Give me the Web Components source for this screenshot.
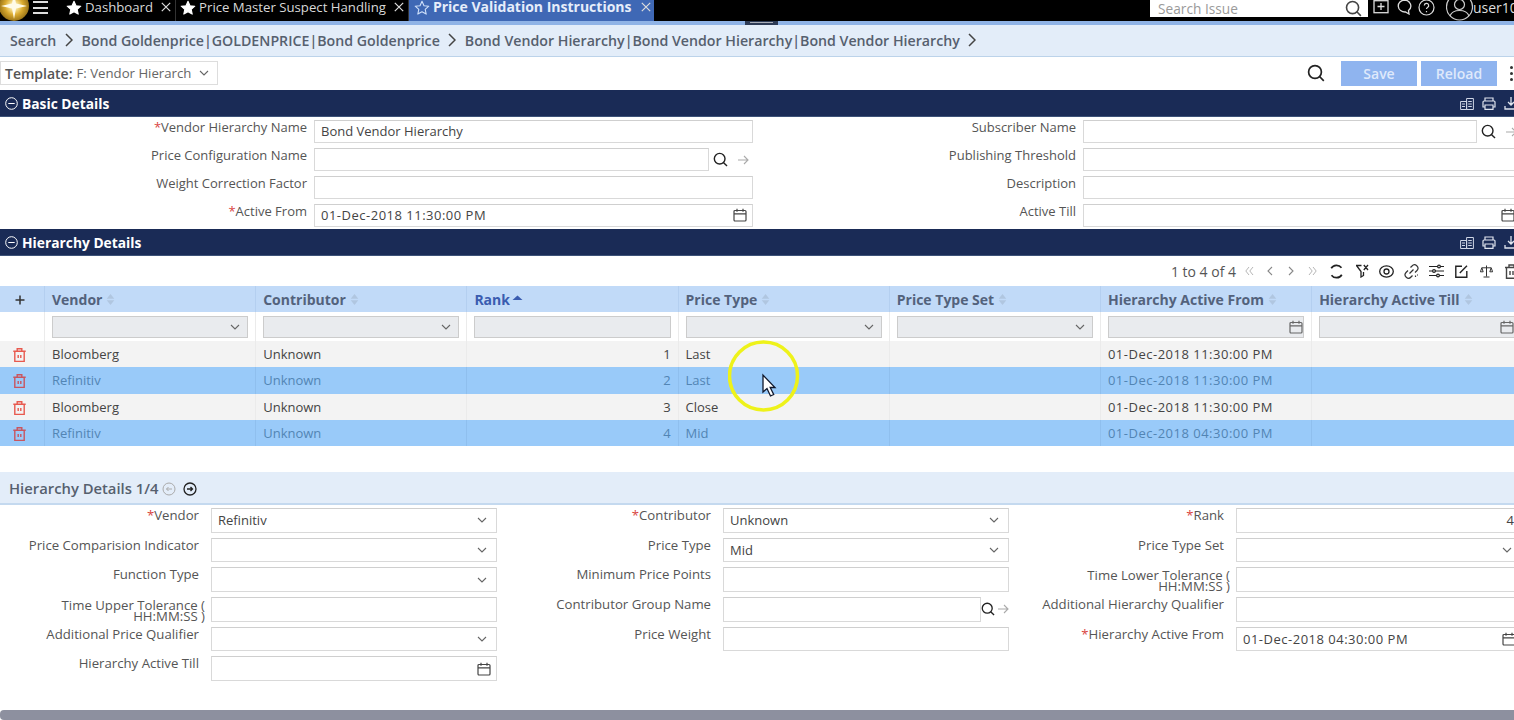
<!DOCTYPE html>
<html><head><meta charset="utf-8">
<style>
html,body{margin:0;padding:0;background:#fff;overflow:hidden;height:100%}
body{font:13px "Open Sans","Noto Sans",sans-serif;color:#444}
</style></head>
<body>
<pv-app></pv-app>
<script>
const I={
 search:(s=18,c='#222')=>`<svg width="${s}" height="${s}" viewBox="0 0 18 18" fill="none" stroke="${c}" stroke-width="1.7"><circle cx="8" cy="8" r="6.4"/><path d="M12.5 12.500 16.8 16.800"/></svg>`,
 arrow:(c='#aaa')=>`<svg width="12" height="12" viewBox="0 0 12 12" fill="none" stroke="${c}" stroke-width="1.1"><path d="M1 6h10M7 2l4 4-4 4"/></svg>`,
 chev:(c='#666')=>`<svg width="10" height="6" viewBox="0 0 10 6" fill="none" stroke="${c}" stroke-width="1.1"><path d="M1 1l4 4 4-4"/></svg>`,
 cal:(c='#444')=>`<svg width="14" height="14" viewBox="0 0 14 14" fill="none" stroke="${c}" stroke-width="1.2"><rect x="1" y="2.500" width="12" height="10.500" rx="1"/><path d="M1 5.800h12M4 .8v3M10 .8v3"/></svg>`,
 star:(f='#fff',st='#fff')=>`<svg width="16" height="16" viewBox="0 0 16 16" fill="${f}" stroke="${st}" stroke-width="1.1" stroke-linejoin="round"><path d="M8 1.300l2 4.400 4.800.5-3.600 3.200 1 4.700L8 11.700l-4.200 2.400 1-4.700L1.200 6.200 6 5.700z"/></svg>`,
 x:(c='#ddd')=>`<svg width="10" height="10" viewBox="0 0 10 10" fill="none" stroke="${c}" stroke-width="1.2"><path d="M.8.800l8.400 8.400M9.200.800L.8 9.200"/></svg>`,
 trash:(c='#e8594e')=>`<svg width="13" height="14" viewBox="0 0 13 14" fill="none" stroke="${c}" stroke-width="1.4"><path d="M.3 3.200h12.400M1.800 3.200v10.200h9.400V3.200M4.200 3.200V.7h4.600v2.500M5.200 7v3M7.800 7v3"/></svg>`,
 circMinus:()=>`<svg width="13" height="13" viewBox="0 0 13 13" fill="none" stroke="#fff" stroke-width="1"><circle cx="6.500" cy="6.500" r="5.800"/><path d="M3.300 6.500h6.400"/></svg>`,
 report:(c='#cfd6e6')=>`<svg width="14" height="13" viewBox="0 0 14 13" fill="none" stroke="${c}" stroke-width="1"><path d="M.6 4.500h6v8h-6zM6.600 1.500h6.800v11H6.600zM2 7h3M2 9.500h3M8.200 4.500h3.600M8.200 7h3.600M8.200 9.500h3.600"/></svg>`,
 print:(c='#dfe4ee')=>`<svg width="14" height="13" viewBox="0 0 14 13" fill="none" stroke="${c}" stroke-width="1.2"><path d="M3 4V1h8v3M3 10H1V5a1 1 0 0 1 1-1h10a1 1 0 0 1 1 1v5h-2M3 8h8v4.400H3z"/></svg>`,
 dl:(c='#dfe4ee')=>`<svg width="14" height="13" viewBox="0 0 14 13" fill="none" stroke="${c}" stroke-width="1.3"><path d="M7 0v7.500M4 5l3 3 3-3M1 9v3h12V9"/></svg>`
};
function def(name,html){customElements.define(name,class extends HTMLElement{
 connectedCallback(){if(this.shadowRoot)return;const r=this.attachShadow({mode:'open'});r.innerHTML=typeof html==='function'?html(this):html;}
});}

def('top-tab',e=>{const a=e.hasAttribute('active'),f=e.hasAttribute('first');
 return `<style>
:host{display:flex;align-items:flex-start;height:21px;padding:0 ${a?3:4}px 0 ${f?0:a?5:4}px;color:${a?'#e6edfa':'#d8d8d8'};background:${a?'#3f68b5':'transparent'};font-size:${a?14:13.2}px;font-weight:${a?700:400};line-height:14px;white-space:nowrap;box-sizing:border-box;border-right:${a?'0':'1px solid #333'}}
svg{display:block;flex:none}
.s{margin-right:3px}.x{margin:2px 0 0 ${a?9:8}px}
</style><span class="s">${a?I.star('none','#cfe0fa'):I.star()}</span><slot></slot><span class="x">${I.x()}</span>`});

def('top-bar',`<style>
:host{display:flex;align-items:flex-start;height:21px;background:#000;color:#ddd;overflow:hidden}
.logo{width:29px;height:21px;overflow:hidden;flex:none;margin-right:4px}
.ham{width:15px;margin:0 18px 0 0;flex:none;padding-top:1px}
.ham b{display:block;height:2px;background:#ddd;margin-bottom:3.500px}
.tabs{display:flex;flex:none}
.sp{flex:1}
.s{flex:none;width:218px;height:17px;background:#fff;display:flex;align-items:center;justify-content:space-between;padding:0 6px 0 8px;box-sizing:border-box;color:#9a9a9a;font-size:13.700px}
.ic{display:flex;align-items:flex-start;flex:none;height:21px;width:146px;overflow:hidden;color:#ddd;font-size:14px;line-height:15px;white-space:nowrap;box-sizing:border-box;padding-left:5px}
svg{display:block;flex:none}
</style>
<div class="logo"><svg width="29" height="21" viewBox="0 0 29 21"><defs><radialGradient id="g" cx="14" cy="6" r="15" gradientUnits="userSpaceOnUse"><stop offset="0" stop-color="#fff"/><stop offset=".3" stop-color="#f4dc8a"/><stop offset=".6" stop-color="#d9a92e"/><stop offset="1" stop-color="#9a7418"/></radialGradient></defs><circle cx="14" cy="6" r="15" fill="url(#g)"/><path d="M14-7l2 10.500L27 6 16 8.500 14 19 12 8.500 1 6l11-2.500z" fill="#fffbe8"/></svg></div>
<div class="ham"><b></b><b></b><b></b></div>
<div class="tabs"><top-tab first>Dashboard</top-tab><top-tab>Price Master Suspect Handling</top-tab><top-tab active>Price Validation Instructions</top-tab></div>
<div class="sp"></div>
<div class="s"><span>Search Issue</span>${I.search(17,'#444')}</div>
<div class="ic">
<svg width="16" height="14" viewBox="0 0 16 14" fill="none" stroke="#ddd" stroke-width="1.300" style="margin-right:7px"><rect x="1" y=".7" width="14" height="12"/><path d="M8 3v7M4.500 6.500h7"/></svg>
<svg width="17" height="15" viewBox="0 0 17 15" fill="none" stroke="#ddd" stroke-width="1.300" style="margin-right:5px"><path d="M8.500 0a6.700 6 0 0 1 4 10.500l.5 3.500-3.500-2a6.700 6 0 1 1-1-12z"/></svg>
<svg width="17" height="16" viewBox="0 0 17 16" fill="none" stroke="#ddd" stroke-width="1.200" style="margin-right:11px"><circle cx="8.500" cy="7.500" r="7.500"/><path d="M6.300 5.500a2.200 2.200 0 1 1 3.200 2c-.7.400-1 .8-1 1.500M8.500 11v1.200"/></svg>
<svg width="27" height="21" viewBox="0 0 27 21" fill="none" stroke="#ccc" stroke-width="1.200"><circle cx="13.500" cy="7" r="13"/><circle cx="13.500" cy="4.500" r="5"/><path d="M4 16c1.500-4 5.500-5.500 9.500-5.500s8 1.500 9.500 5.500"/></svg>user10
</div>`);
def('top-notch',`<style>:host{position:absolute;left:745px;top:21px;width:33px;height:4px;background:#2d3a55;display:block}
i{display:block;margin:1px 5px 0;height:1px;background:#a9adb8}</style><i></i>`);

def('crumb-bar',`<style>
:host{display:block;border-top:4px solid #8fb3e6;background:#e3edf9;height:31px;border-bottom:1px solid #bcd3ea}
.w{display:flex;align-items:center;height:30px;padding:0 0 1px 10px;font-weight:600;color:#56606e;font-size:14.200px;white-space:nowrap;gap:8.500px}
</style><div class="w"><slot></slot></div>`);
def('crumb-sep',`<style>:host{display:block}svg{display:block}</style><svg width="8" height="14" viewBox="0 0 8 14" fill="none" stroke="#444" stroke-width="1.500"><path d="M1 1l6 6-6 6"/></svg>`);

def('tool-bar',`<style>
:host{display:flex;align-items:center;height:33px;background:#fff;box-sizing:border-box;padding:0 1px 1px 0}
.t{display:flex;align-items:center;width:218px;height:24px;box-sizing:border-box;border:1px solid #ddd;padding:0 8px 0 4px;font-size:13.200px;white-space:nowrap;overflow:hidden}
.t b{font-weight:600;font-size:14px;margin-right:4px;color:#555}
.t span{flex:1;overflow:hidden;color:#666}
.sp{flex:1}
.b{width:76px;height:25px;background:#8fb4ef;color:#dfe9fb;font-weight:600;font-size:14px;display:flex;align-items:center;justify-content:center;margin-left:4px}
.s{margin-right:12px}
.d{width:3px;margin:0 0 0 13px;display:flex;flex-direction:column;gap:3px}
.d i{display:block;height:3px;width:3px;background:#333;border-radius:50%}
svg{display:block;flex:none}
</style>
<div class="t"><b>Template:</b><span>F: Vendor Hierarch</span>${I.chev()}</div><div class="sp"></div>
<div class="s">${I.search()}</div><div class="b">Save</div><div class="b">Reload</div><div class="d"><i></i><i></i><i></i></div>`);

def('sec-bar',`<style>
:host{display:flex;align-items:center;height:27px;background:#1a2b56;color:#fff;font-weight:700;font-size:13.800px;padding-left:5px;gap:4px;box-sizing:border-box;border-bottom:1px solid #3d5278}
span{flex:1}.i{display:flex;gap:8px;width:54px;flex:none;overflow:hidden}
svg{display:block;flex:none}
</style>${I.circMinus()}<span><slot></slot></span><div class="i">${I.report()}${I.print()}${I.dl()}</div>`);

def('f-label',e=>{const two=e.hasAttribute('two');return `<style>
:host{display:block;text-align:right;color:#555;font-size:var(--lf,13px);line-height:${two?'11px':'15px'};white-space:nowrap;padding-top:${two?'3px':'0'};${two?'margin-right:-6px;':''}}
i{color:#d9453f;font-style:normal}
</style>${e.hasAttribute('req')?'<i>*</i>':''}<slot></slot>`});
def('f-input',e=>{const k=e.getAttribute('k')||'';const ic=k==='sel'?I.chev():k==='date'?I.cal():'';
 return `<style>
:host{display:block;min-width:0}
.o{display:flex;align-items:center;height:100%}
.b{flex:1;min-width:0;height:100%;box-sizing:border-box;border:1px solid #d9d9d9;border-top-color:#cfcfcf;display:flex;align-items:center;padding:0 5px var(--pb,0) 6px;color:#444;font-size:13px;background:#fff;justify-content:space-between;white-space:nowrap}
${e.hasAttribute('end')?'.v{margin-left:auto;margin-right:2px}':''}
svg{display:block;flex:none}
.x{display:flex;align-items:center;flex:none;gap:${k==='s2'?'2px':'9px'};padding:${k==='s2'?'0':'0 4px'}}
.r{margin-right:${k==='sel'?4:0}px}
</style><div class="o"><div class="b"><span class="v"><slot></slot></span><span class="r">${ic}</span></div>${(k==='s'||k==='s2')?`<div class="x">${I.search(k==='s2'?14:15)}${I.arrow()}</div>`:''}</div>`});

def('basic-form',`<style>
:host{display:grid;--pb:1px;grid-template-columns:307px 439px 316px 438px;column-gap:7px;grid-auto-rows:23px;row-gap:5px;padding:3px 0 2px;background:#fff;overflow:hidden;width:1521px}
</style><slot></slot>`);
def('detail-form',`<style>
:host{display:grid;--lf:13.200px;grid-template-columns:199px 286px 202px 286px 203px 286px;column-gap:12px;grid-auto-rows:24.500px;row-gap:5.200px;padding:3px 0 0;background:#fff;overflow:hidden;width:1522px}
</style><slot></slot>`);

const chv=(d,c)=>`<svg width="6" height="10" viewBox="0 0 6 10" fill="none" stroke="${c}" stroke-width="1.100"><path d="${d}"/></svg>`;
const dbl=(d1,d2)=>`<svg width="9" height="10" viewBox="0 0 9 10" fill="none" stroke="#b5b5b5" stroke-width="1"><path d="${d1}${d2}"/></svg>`;
def('grid-bar',`<style>
:host{display:flex;align-items:center;justify-content:flex-end;height:30px;background:#fff;font-size:14px;color:#555;overflow:hidden;white-space:nowrap}
.p{display:grid;grid-template-columns:repeat(4,21px);justify-items:center;align-items:center;margin:0 1.500px 0 2.500px}
.i{display:grid;grid-auto-flow:column;grid-auto-columns:25px;justify-items:center;align-items:center;width:190px;flex:none;overflow:hidden}
svg{display:block;flex:none}
</style>1 to 4 of 4<div class="p">${dbl('M4 1L.8 5 4 9','M8 1L4.800 5 8 9')}${chv('M5 1L1 5l4 4','#888')}${chv('M1 1l4 4-4 4','#888')}${dbl('M1 1l3.200 4L1 9','M5 1l3.200 4L5 9')}</div>
<div class="i">
<svg width="15" height="15" viewBox="0 0 15 15" fill="none" stroke="#222" stroke-width="1.700"><path d="M12.500 3.800A6.200 6.200 0 0 0 2.200 4.300M2.500 11.200A6.200 6.200 0 0 0 12.800 10.700"/></svg>
<svg width="14" height="14" viewBox="0 0 14 14" fill="none" stroke="#222" stroke-width="1.300"><path d="M1 1.500h5.500M1.500 1.500L6 7.500V13l2.500-1.500V8M8.800 1l4.200 5M13 1L8.800 6"/></svg>
<svg width="15" height="15" viewBox="0 0 15 15" fill="none" stroke="#222" stroke-width="1.300"><ellipse cx="7.500" cy="7.500" rx="6.800" ry="5.600"/><circle cx="7.500" cy="7.500" r="2.500"/></svg>
<svg width="15" height="15" viewBox="0 0 15 15" fill="none" stroke="#333" stroke-width="1.200"><path d="M6.500 3.500l1.500-1.500a3.200 3.200 0 0 1 5 4.500L11 8.500M8.500 11.500L7 13a3.200 3.200 0 0 1-5-4.500L4 6.500M5.500 9.500l4-4M11.500 11.500v1.500M13 11h1"/></svg>
<svg width="15" height="14" viewBox="0 0 15 14" fill="none" stroke="#222" stroke-width="1.200"><path d="M0 2.500h15M0 7h15M0 11.500h15"/><circle cx="10" cy="2.500" r="1.400" fill="#fff"/><circle cx="5" cy="7" r="1.400" fill="#fff"/><circle cx="9" cy="11.500" r="1.400" fill="#fff"/></svg>
<svg width="13" height="13" viewBox="0 0 13 13" fill="none" stroke="#222" stroke-width="1.400"><path d="M7 1.200H.8v11h11V6M4.800 8L12 .8"/></svg>
<svg width="13" height="13" viewBox="0 0 13 13" fill="none" stroke="#333" stroke-width="1"><path d="M6.500 .5v11M3.500 12h6M1.800 2.800h9.400M1.800 2.800L.4 6.800h2.800zM11.200 2.800L9.800 6.800h2.800z"/></svg>
<svg width="15" height="15" viewBox="0 0 15 15" fill="none" stroke="#444" stroke-width="1.400"><path d="M1 3.500h13M2.500 3.500V14.300h10V3.500M5 3.500V1h5v2.500M6 7v4M9 7v4"/></svg>
</div>`);

def('g-row',e=>`<style>
:host{display:grid;grid-template-columns:45px repeat(7,211.200px);height:${e.getAttribute('h')||26.25}px;width:1524px;background:${e.hasAttribute('sel')?'#99caf9':e.hasAttribute('hd')?'#c1daf8':e.hasAttribute('flt')?'#fff':'#f3f3f3'};box-sizing:border-box}
</style><slot></slot>`);
def('g-cell',e=>{const p=e.parentElement;const sel=p.hasAttribute('sel'),hd=p.hasAttribute('hd');
 return `<style>
:host{display:flex;align-items:center;box-sizing:border-box;padding:0 7px;font-size:13px;color:${sel?'#5285b4':'#444'};white-space:nowrap;border-right:1px solid ${sel?'#8fbfee':hd?'#b4cff0':'#ebebeb'};${e.hasAttribute('num')?'justify-content:flex-end;':''}${hd?`font-weight:700;font-size:14px;color:${e.hasAttribute('act')?'#3a5cb0':'#53627c'};`:''}${e.hasAttribute('ic')?'justify-content:center;padding:2px 5px 0 0;':''}}
</style><slot></slot>`});
def('date-text',`<style>:host{display:inline;letter-spacing:.5px}</style><slot></slot>`);
def('sort-ic',e=>{const u=e.hasAttribute('up');return `<style>:host{display:inline-block;margin-left:${u?2:4}px}svg{display:block}</style><svg width="${u?11:9}" height="13" viewBox="0 0 ${u?11:9} 13">${u?'<path d="M5.500 2.500l5 4.500H.5z" fill="#3a5cb0"/>':'<path d="M4.500 1l3.800 4.800H.7z" fill="#b0c6e0"/><path d="M4.500 12l3.800-4.800H.7z" fill="#b0c6e0"/>'}</svg>`});
def('flt-box',e=>{const k=e.getAttribute('k');return `<style>
:host{display:flex;flex:1;align-items:center;justify-content:flex-end;height:22px;background:#e9ebee;border:1px solid #ccc;box-sizing:border-box;padding:0 ${k==='cal'?0:7}px 0 0}svg{display:block}
</style>${k==='cal'?I.cal('#666'):k==='sel'?I.chev('#666'):''}`});
def('plus-ic',`<style>:host{display:block}svg{display:block}</style><svg width="10" height="10" viewBox="0 0 10 10" stroke="#333" stroke-width="1.500"><path d="M5 .5v9M.5 5h9"/></svg>`);
def('trash-ic',e=>`<style>:host{display:block}svg{display:block}</style>${I.trash(e.hasAttribute('d')?'#c9555f':'#e8594e')}`);

def('sub-bar',`<style>
:host{display:flex;align-items:center;height:31px;background:#e3edf9;border-bottom:2px solid #c4d9ef;padding-left:9px;font-weight:600;font-size:14.800px;color:#56606e}
svg{display:block}
</style><slot></slot>
<svg width="14" height="14" viewBox="0 0 14 14" fill="none" stroke="#aaa" stroke-width="1" style="margin:2px 0 0 4px"><circle cx="7" cy="7" r="6"/><path d="M10 7H4.500M6.500 5L4.500 7l2 2"/></svg>
<svg width="14" height="14" viewBox="0 0 14 14" fill="none" stroke="#222" stroke-width="1.300" style="margin:2px 0 0 7px"><circle cx="7" cy="7" r="6"/><path d="M4 7h5.500M7.500 5l2 2-2 2"/></svg>`);

def('cursor-mark',`<style>
:host{position:absolute;left:728px;top:340px;width:72px;height:72px;display:block;pointer-events:none}
svg{display:block}
</style><svg width="72" height="72" viewBox="0 0 72 72" fill="none"><circle cx="35.500" cy="36" r="34" stroke="#eef21a" stroke-width="3.500"/><path d="M35 35v17l4-3.500 3.500 7.500 3.200-1.500-3.500-7H47z" fill="#fff" stroke="#10182c" stroke-width="1.300"/></svg>`);
def('scroll-bar',`<style>:host{display:block;height:10px;background:#8d909f;border-radius:4px 0 0 4px}</style>`);

def('pv-app',`<style>
:host{display:flex;flex-direction:column;position:relative;width:1514px;height:720px;overflow:hidden;background:#fff}
.sp{height:26px;flex:none}.g{flex:1}
</style>
<top-bar></top-bar>
<crumb-bar>Search<crumb-sep></crumb-sep>Bond Goldenprice|GOLDENPRICE|Bond Goldenprice<crumb-sep></crumb-sep>Bond Vendor Hierarchy|Bond Vendor Hierarchy|Bond Vendor Hierarchy<crumb-sep></crumb-sep></crumb-bar>
<tool-bar></tool-bar>
<sec-bar>Basic Details</sec-bar>
<basic-form>
<f-label req>Vendor Hierarchy Name</f-label><f-input>Bond Vendor Hierarchy</f-input><f-label>Subscriber Name</f-label><f-input k="s"></f-input>
<f-label>Price Configuration Name</f-label><f-input k="s"></f-input><f-label>Publishing Threshold</f-label><f-input></f-input>
<f-label>Weight Correction Factor</f-label><f-input></f-input><f-label>Description</f-label><f-input></f-input>
<f-label req>Active From</f-label><f-input k="date"><date-text>01-Dec-2018 11:30:00 PM</date-text></f-input><f-label>Active Till</f-label><f-input k="date"></f-input>
</basic-form>
<sec-bar>Hierarchy Details</sec-bar>
<grid-bar></grid-bar>
<g-row hd h="26"><g-cell ic><plus-ic></plus-ic></g-cell><g-cell>Vendor<sort-ic></sort-ic></g-cell><g-cell>Contributor<sort-ic></sort-ic></g-cell><g-cell act>Rank<sort-ic up></sort-ic></g-cell><g-cell>Price Type<sort-ic></sort-ic></g-cell><g-cell>Price Type Set<sort-ic></sort-ic></g-cell><g-cell>Hierarchy Active From<sort-ic></sort-ic></g-cell><g-cell>Hierarchy Active Till<sort-ic></sort-ic></g-cell></g-row>
<g-row flt h="29"><g-cell></g-cell><g-cell><flt-box k="sel"></flt-box></g-cell><g-cell><flt-box k="sel"></flt-box></g-cell><g-cell><flt-box></flt-box></g-cell><g-cell><flt-box k="sel"></flt-box></g-cell><g-cell><flt-box k="sel"></flt-box></g-cell><g-cell><flt-box k="cal"></flt-box></g-cell><g-cell><flt-box k="cal"></flt-box></g-cell></g-row>
<g-row><g-cell ic><trash-ic></trash-ic></g-cell><g-cell>Bloomberg</g-cell><g-cell>Unknown</g-cell><g-cell num>1</g-cell><g-cell>Last</g-cell><g-cell></g-cell><g-cell><date-text>01-Dec-2018 11:30:00 PM</date-text></g-cell><g-cell></g-cell></g-row>
<g-row sel><g-cell ic><trash-ic d></trash-ic></g-cell><g-cell>Refinitiv</g-cell><g-cell>Unknown</g-cell><g-cell num>2</g-cell><g-cell>Last</g-cell><g-cell></g-cell><g-cell><date-text>01-Dec-2018 11:30:00 PM</date-text></g-cell><g-cell></g-cell></g-row>
<g-row><g-cell ic><trash-ic></trash-ic></g-cell><g-cell>Bloomberg</g-cell><g-cell>Unknown</g-cell><g-cell num>3</g-cell><g-cell>Close</g-cell><g-cell></g-cell><g-cell><date-text>01-Dec-2018 11:30:00 PM</date-text></g-cell><g-cell></g-cell></g-row>
<g-row sel><g-cell ic><trash-ic d></trash-ic></g-cell><g-cell>Refinitiv</g-cell><g-cell>Unknown</g-cell><g-cell num>4</g-cell><g-cell>Mid</g-cell><g-cell></g-cell><g-cell><date-text>01-Dec-2018 04:30:00 PM</date-text></g-cell><g-cell></g-cell></g-row>
<div class="sp"></div>
<sub-bar>Hierarchy Details 1/4</sub-bar>
<detail-form>
<f-label req>Vendor</f-label><f-input k="sel">Refinitiv</f-input><f-label req>Contributor</f-label><f-input k="sel">Unknown</f-input><f-label req>Rank</f-label><f-input end>4</f-input>
<f-label>Price Comparision Indicator</f-label><f-input k="sel"></f-input><f-label>Price Type</f-label><f-input k="sel">Mid</f-input><f-label>Price Type Set</f-label><f-input k="sel"></f-input>
<f-label>Function Type</f-label><f-input k="sel"></f-input><f-label>Minimum Price Points</f-label><f-input></f-input><f-label two>Time Lower Tolerance (<br>HH:MM:SS )</f-label><f-input></f-input>
<f-label two>Time Upper Tolerance (<br>HH:MM:SS )</f-label><f-input></f-input><f-label>Contributor Group Name</f-label><f-input k="s2"></f-input><f-label>Additional Hierarchy Qualifier</f-label><f-input></f-input>
<f-label>Additional Price Qualifier</f-label><f-input k="sel"></f-input><f-label>Price Weight</f-label><f-input></f-input><f-label req>Hierarchy Active From</f-label><f-input k="date"><date-text>01-Dec-2018 04:30:00 PM</date-text></f-input>
<f-label>Hierarchy Active Till</f-label><f-input k="date"></f-input>
</detail-form>
<div class="g"></div>
<scroll-bar></scroll-bar>
<top-notch></top-notch>
<cursor-mark></cursor-mark>`);
</script>
</body></html>
